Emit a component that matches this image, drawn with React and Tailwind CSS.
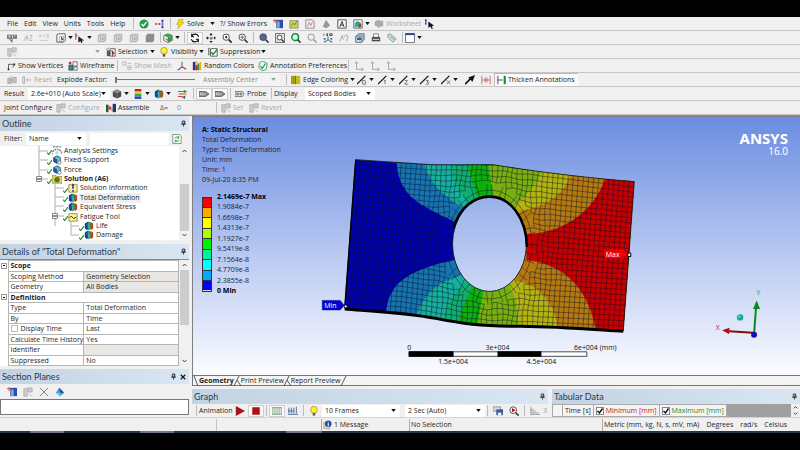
import { useMemo } from "react"
import clsx from "clsx"

// small toolbar drawings, all on a 12 x 12 grid
const glyphs = {
    check: <><circle cx="6" cy="6" r="5.5" fill="#1f9d4d" /><path d="M3 6l2.2 2.4L9 3.8" stroke="#fff" strokeWidth="1.6" fill="none" /></>,
    nodes: <><path d="M1 6h5M6 6l4-4M6 6l4 4" stroke="#99a" fill="none" strokeWidth=".6" /><path d="M0 5h2v2H0zM4 5h2v2H4z" fill="#c22" /><path d="M8 1h2v3H8zM8 5h2v2H8zM8 8h2v3H8z" fill="#22a" /></>,
    bolt: <><path d="M5 0h5L8 4h3L3 12l2-5H2z" fill="#f5d90a" stroke="#b59200" strokeWidth=".6" /></>,
    chartBlue: <><path d="M4 1h8v10H4z" fill="#2b4fa8" /><path d="M5 3h3v8H5z" fill="#88a8e8" /><path d="M0 2h5M2.5 0v5" stroke="#c33" strokeWidth="1" /></>,
    note: <><path d="M1 2h10v9H1z" fill="#d8cf50" stroke="#555" strokeWidth=".6" /><path d="M3 8l2-3 2 2 3-5" stroke="#383" fill="none" /></>,
    page: <><path d="M1 1h8l2 2v8H1z" fill="#f7eeee" stroke="#555" strokeWidth=".7" /><path d="M3 9l2-5 2 4 2-5" stroke="#b55" fill="none" strokeWidth=".8" /></>,
    blob: <path d="M6 1l3 4 2 3-5 3-4-2 2-4z" fill="#999" />,
    boxA: <><path d="M1 1h10v10H1z" fill="#fff" stroke="#333" strokeWidth="1" /><path d="M3.5 9.5L6 3l2.5 6.5M4.5 7.2h3" stroke="#222" fill="none" strokeWidth="1.1" /></>,
    figure: <><path d="M1 1h10v10H1z" fill="#fff" stroke="#556" /><path d="M2 5l3-3 2 3-2 5H2z" fill="#28a8c8" /><path d="M5 3l4 1 1 4-3 3-2-3z" fill="#3a3" /><path d="M7 6l3 0v4H7z" fill="#b33" /></>,
    sheet: <path d="M2 2l4-1 1 1h4v7H7l-2 2-1-2-3-1V4z" fill="#aaa" />,
    pointerInfo: <><path d="M1 0v6M0 2h2M0 6h2" stroke="#22c" strokeWidth="1.2" /><path d="M4 3l7 5-3 .5 1.5 3-1.5.5L6.500 9 4 10.500z" fill="#111" /></>,
    label: <><path d="M0 2h12v5H0z" fill="#777" /><path d="M2 3h2v2H2zM6 3h1v3H6zM8 3h2v1H8z" fill="#eee" /><path d="M3 7l3 4M6 7v4" stroke="#444" /></>,
    coords: <><path d="M1 10l3-7M5 3v6M4 6h3M8 3h3l-3 6h3" stroke="#aaa" fill="none" strokeWidth=".9" /></>,
    xyz: <><path d="M0 2l3 3M3 2L0 5M5 2l1 2 2-2M9 2h3L9 5h3M1 9h3M5 9h3M9 9h2" stroke="#bbb" fill="none" strokeWidth=".9" /></>,
    pick: <><path d="M1 2l2-1h8v8l-2 2H1z" fill="#fff" stroke="#333" strokeWidth=".9" /><path d="M4 4h5v6H4z" fill="none" stroke="#777" strokeWidth=".7" /><path d="M6 4l3 4-2 0v3z" fill="#111" /></>,
    cursorTree: <><path d="M1 0v8M1 3h2" stroke="#b33" strokeWidth="1.2" /><path d="M4 4l7 5-3 .3 1 2.700H7.500L6.500 10 4 11.500z" fill="#222" /></>,
    cubeGrey: <path d="M1.500 3.500h7v7h-7zM1.500 3.500l2-2h7v7l-2 2M4 5v4l4-2z" fill="#e4e4e4" stroke="#999" strokeWidth=".9" />,
    solid: <path d="M1 4l2-3h8v8l-2 2H1z" fill="#8c8c8c" />,
    cubeGreen: <><path d="M1 3l5-2 5 2v6l-5 2.500L1 9z" fill="#f4f4f4" stroke="#333" strokeWidth=".8" /><path d="M1 3l5-2 5 2-5 2z" fill="#2da84a" /><path d="M6 5l5-2v6l-5 2z" fill="#2da84a" /><path d="M3 7l3 2M6 5v5" stroke="#c33" /></>,
    rotate: <path d="M10.500 4.500A4.600 4.600 0 0 0 2 4M2 1v3.500h3M1.500 7.500A4.600 4.600 0 0 0 10 8M10 11V7.500H7" stroke="#111" fill="none" strokeWidth="1.300" />,
    pan: <><path d="M6 1v10M1 6h10" stroke="#333" strokeWidth="1" strokeDasharray="3 1.500" /><path d="M6 0l2 2.500H4zM6 12l2-2.500H4zM0 6l2.500-2v4zM12 6L9.500 4v4z" fill="#222" /></>,
    zoom: <><circle cx="5" cy="5" r="3.800" fill="#fff" stroke="#333" /><path d="M8 8l3.500 3.500" stroke="#222" strokeWidth="2" /><path d="M5 3l1.500 2L5 7 3.500 5z" fill="#222" /></>,
    zoomPlus: <><circle cx="5" cy="5" r="3.800" fill="#fff" stroke="#333" /><path d="M8 8l3.500 3.500" stroke="#222" strokeWidth="1.700" /><path d="M3 5h4M5 3v4" stroke="#444" /></>,
    zoomBlue: <><circle cx="5" cy="5" r="4" fill="#55669a" stroke="#444" /><path d="M8 8l3.500 3.500" stroke="#222" strokeWidth="1.700" /></>,
    zoomBox: <><path d="M.5.5h11v11H.5z" fill="#ddd" stroke="#555" /><circle cx="5.500" cy="5.500" r="2.800" fill="#fff" stroke="#333" /><path d="M8 8l2.500 2.500" stroke="#222" strokeWidth="1.400" /></>,
    zoomGreen: <><circle cx="5" cy="5" r="4" fill="#cfe" stroke="#188a3c" strokeWidth="1.800" /><path d="M8 8l3.500 3.500" stroke="#222" strokeWidth="1.700" /></>,
    zoomGrey: <><circle cx="5" cy="5" r="3.800" fill="#eee" stroke="#888" /><path d="M8 8l3.500 3.500" stroke="#999" strokeWidth="1.700" /></>,
    iso: <><path d="M1 1v2M4 1h2L4 3h2M8 1h3v2H8z" stroke="#333" fill="none" /><path d="M6 4v4L1.500 11M6 8l4.500 3" stroke="#2a8a9a" fill="none" strokeWidth="1.300" /><path d="M1 6h2v2H1zM9 6h2v2H9z" fill="#366" /><path d="M1 10h2v1H1zM9 10h2v1H9z" fill="#c33" /></>,
    restore: <path d="M1 10l3-7M4 3l1 5M7 5a2 2 0 1 1 3 1l-1 4" stroke="#999" fill="none" />,
    view: <><path d="M1 4l3-3h7v7l-3 3H1z" fill="#a9bddc" stroke="#345" strokeWidth=".8" /><path d="M1 4h7v7H1z" fill="#dde6f4" stroke="#345" strokeWidth=".6" /><ellipse cx="5" cy="7" rx="3" ry="1.800" fill="#3a5a9a" /></>,
    print: <><path d="M3 1h6v4H3z" fill="#fff" stroke="#555" strokeWidth=".8" /><path d="M1 5h10v5H1z" fill="#444" /><path d="M2 7h8v1.500H2z" fill="#d8d060" /></>,
    tag: <><path d="M1 2l3-1 7 6-4 4-6-6z" fill="#cfe0e0" stroke="#678" strokeWidth=".8" /><path d="M4 4l5 4" stroke="#688" /></>,
    window: <><path d="M.5.5h11v11H.5z" fill="#fff" stroke="#445" strokeWidth=".9" /><path d="M.5.5h11v2H.5z" fill="#2c3f88" /></>,
    select: <><path d="M1 4h4v7H1z" fill="#3a6a50" /><path d="M5 2h6v9H5z" fill="#f5f0e4" stroke="#333" strokeWidth=".8" /><path d="M7 4l3 4-2 0v3zM0 3l4-2" stroke="#922" fill="#222" strokeWidth=".7" /></>,
    bulb: <><circle cx="6" cy="4.500" r="4" fill="#ffee2e" stroke="#8a7a00" strokeWidth=".7" /><path d="M4.500 8.500h3v3h-3z" fill="#555" /></>,
    suppress: <><path d="M3 2h8v9H3z" fill="#fff" stroke="#333" strokeWidth=".9" /><path d="M1 1v9" stroke="#333" /><path d="M4 6l2 3 5-6" stroke="#1c9a3a" fill="none" strokeWidth="1.800" /></>,
    vertex: <><path d="M3 10V4h7L8 8" stroke="#333" fill="none" strokeWidth=".9" /><path d="M2 9h2v2H2zM9 3h2v2H9z" fill="#222" /></>,
    wire: <><path d="M1 5h5v6H1z" fill="#3b8a8a" stroke="#233" strokeWidth=".7" /><path d="M6 1h5v5H6zM7 7h4v4H7z" fill="#fff" stroke="#333" strokeWidth=".8" /><path d="M1 1h3v3H1z" fill="#c33" /></>,
    mesh: <path d="M1 1h4v4H1zM7 3h4M7 6h4v4H7zM7 8h4" fill="none" stroke="#b0b0b0" strokeWidth=".9" />,
    axes: <><path d="M6 7V1" stroke="#1a9a4a" strokeWidth="1.300" /><path d="M6 7l-5 4" stroke="#2a3ac0" strokeWidth="1.300" /><path d="M6 7l5 3" stroke="#c22" strokeWidth="1.300" /></>,
    palette: <><path d="M1 1h3v10H1z" fill="#2a2a9a" /><path d="M4 1h2v10H4z" fill="#c22" /><path d="M6 3h3v8H6z" fill="#2a9a3a" /><path d="M9 1h2v10H9z" fill="#e0b020" /><path d="M4 1h3v4H4z" fill="#e8d040" /></>,
    annotate: <><path d="M6 0l5 3-1 7-5 2-4-4 1-6z" fill="#e8f6f0" stroke="#2a9a7a" /><path d="M3 6l2 3 4-6" stroke="#1c8a3a" fill="none" strokeWidth="1.300" /></>,
    corner: <path d="M3 1v9h8M1.500 3L3 1l1.500 2M9 8.500l2 1.500-2 1.500" stroke="#999" fill="none" />,
    explode: <path d="M1 4h3v6H1zM5 1v10M7 3h4v6H7zM3 6h6" fill="#ccc" stroke="#999" strokeWidth=".9" />,
    reset: <path d="M1 2v8h2V2zM11 6H5M7 4L5 6l2 2" fill="none" stroke="#aaa" />,
    edge: <><path d="M0 1h5v10H0z" fill="#a8a010" /><path d="M6 1h5v10H6z" fill="#c4bc18" /><path d="M5 1h1v10H5z" fill="#655f00" /></>,
    thickArrow: <><path d="M0 11L7 4" stroke="#111" strokeWidth="2" /><path d="M12 0L4 3l5 5z" fill="#111" /></>,
    gapRed: <path d="M1 1v10M11 1v10M5 3v6M7 3v6M1 6h10" stroke="#b55" fill="none" strokeWidth=".9" />,
    thicken: <><path d="M1 1v10M1 6h6" stroke="#333" /><path d="M8 1h2.500v10H8z" fill="#1a8a3a" /></>,
    edgeFree: <><path d="M0 11L10 1" stroke="#111" strokeWidth="1.500" /><path d="M6 6l4 1v4H7z" fill="none" stroke="#555" strokeWidth=".9" /></>,
    edgeSingle: <><path d="M0 11L10 1" stroke="#111" strokeWidth="1.500" /><path d="M8.500 6v5M7 7l1.500-1" fill="none" stroke="#555" strokeWidth=".9" /></>,
    edgeDouble: <><path d="M0 11L10 1" stroke="#111" strokeWidth="1.500" /><path d="M7 6.500h3L7 11h4" fill="none" stroke="#555" strokeWidth=".9" /></>,
    edgeTriple: <><path d="M0 11L10 1" stroke="#111" strokeWidth="1.500" /><path d="M7 6.500h3L8.500 8.500H10V11H7" fill="none" stroke="#555" strokeWidth=".9" /></>,
    edgeMulti: <><path d="M0 11L10 1" stroke="#111" strokeWidth="1.500" /><path d="M7 6.500l4 4.500M11 6.500L7 11" fill="none" stroke="#555" strokeWidth=".9" /></>,
    cube: <><path d="M1 3l5-2.500L11 3v6l-5 2.500L1 9z" fill="#4b4b4b" /><path d="M1 3l5-2.500L11 3 6 5.500z" fill="#8a8a8a" /><path d="M6 5.500V11" stroke="#999" strokeWidth=".6" /></>,
    bands: <><path d="M2 0h8v3H2z" fill="#c22" /><path d="M2 3h8v3H2z" fill="#e0c820" /><path d="M2 6h8v3H2z" fill="#2aa84a" /><path d="M2 9h8v3H2z" fill="#2a4ac0" /></>,
    ball: <><path d="M1 3l4-2.500L6 6 4 11 1 9z" fill="#1e3f98" /><path d="M5 .5L9 2v7l-4 2.500z" fill="#2a9a4a" /><path d="M8 1.500L11 3v6l-3 2z" fill="#c8401c" /><path d="M4 3l3 2v4l-2 1z" fill="#30b0b0" /></>,
    vectors: <><path d="M0 3h7M1 6h7M0 9h6" stroke="#c33" strokeWidth="1.100" /><path d="M7 1l4 2-4 2z" fill="#2a9a3a" /><path d="M8 4.500l3 1.500-3 2z" fill="#d8b010" /><path d="M5 10l4-2-1 4z" fill="#345" /></>,
    max: <><path d="M0 3h8l4 3-4 3H0z" fill="#888" stroke="#333" strokeWidth=".7" /><path d="M1.500 7.500v-3l1.500 2 1.500-2v3M6 7.500L8 4.500" stroke="#eee" fill="none" strokeWidth=".8" /></>,
    probe: <path d="M0 3h9l2 3-2 3H0zM2 5h2v2H2zM6 5h2v2H6z" fill="#ddd" stroke="#444" strokeWidth=".7" />,
    joint: <path d="M1 2h4v9H1zM6 1h5v5H6zM7 8l4 3" fill="#ccc" stroke="#aaa" strokeWidth=".9" />,
    assemble: <><path d="M0 2h3v9H0z" fill="#235f2b" /><path d="M3 4h3v4H3z" fill="#d33" /><path d="M6 5h2v5H6z" fill="#e8c020" /><path d="M8 1h4v10H8z" fill="#1a3a8a" /></>,
    refresh: <><path d="M1 .5h8l2 2v9H1z" fill="#fff" stroke="#476a47" strokeWidth=".8" /><path d="M3.500 5.500a2.600 2.600 0 0 1 4.500-1M8 2.500v2.500H6M8.500 7a2.600 2.600 0 0 1-4.500 1M4 10V7.500h2" stroke="#1f9a3f" fill="none" strokeWidth="1.100" /></>,
    settings: <><path d="M0 10a6 6 0 0 1 12 0" fill="none" stroke="#667" strokeDasharray="2 1" strokeWidth="1.600" /><path d="M1 1h3M5 1h3M9 1h2" stroke="#345" /><circle cx="6" cy="8" r="2" fill="#a9dff0" /></>,
    support: <><path d="M2 3l4-2 4 2v5l-4 2-4-2z" fill="#58c2d8" stroke="#134" strokeWidth=".8" /><path d="M2 3l4 2v5l-4-2z" fill="#2a4a9a" /><circle cx="9" cy="9" r="2" fill="#fff" stroke="#333" strokeWidth=".7" /></>,
    solution: <><path d="M0 2h5l1 1h6v8H0z" fill="#e8d860" stroke="#7a6a10" strokeWidth=".7" /><circle cx="6" cy="7" r="3.300" fill="#2a8a3a" /><path d="M5 4l4 2-2 4z" fill="#d0441a" /></>,
    info: <><path d="M1 2h10v9H1z" fill="#fdf39a" stroke="#7a6a10" strokeWidth=".8" /><path d="M6 1v6M6 8.500v2" stroke="#1a1a80" strokeWidth="1.700" /></>,
    fatigue: <><path d="M1 2h10v9H1z" fill="#fdf39a" stroke="#7a6a10" strokeWidth=".8" /><path d="M2 7l2-2 3 3 3-2" stroke="#222" fill="none" strokeWidth="1.200" /></>,
    cross: <path d="M1 1l10 10M11 1L1 11" stroke="#777" fill="none" strokeWidth="1.100" />,
    prism: <><path d="M1 7l4-6 6 6-5 4z" fill="#3aa0d8" /><path d="M5 1l6 6H6z" fill="#1a5a9a" /><path d="M1 7l5 4V7z" fill="#7ac8ee" /></>,
    play: <path d="M1 0l11 6-11 6z" fill="#b01018" />,
    stop: <path d="M1.500 1.500h9v9h-9z" fill="#b01018" />,
    gridGreen: <path d="M1 2v8M3.500 2v8M6 2v8M8.500 2v8M11 2v8M0 2h12M0 10h12" stroke="#688a68" fill="none" strokeWidth=".9" />,
    gridBlue: <path d="M1 2v7M4 2v7M7 2v7M10 1v8M0 10h12M0 6h7" stroke="#456a98" fill="none" strokeWidth="1.100" />,
    save: <><path d="M0 1h9v5H0z" fill="#cde" stroke="#678" strokeWidth=".8" /><path d="M4 4h8v7H4z" fill="#3a5a98" /><path d="M6 8h4v3H6z" fill="#fff" /></>,
    zoomRed: <><circle cx="5" cy="5" r="4" fill="#fff" stroke="#333" /><path d="M8 8l3.500 3.500" stroke="#222" strokeWidth="1.700" /><path d="M3.500 2.500L8 5 3.500 7.500z" fill="#b01018" /></>,
    levels: <path d="M1 1v10M1 4h3M1 6h6M1 8h9M1 10h11" stroke="#aaa" fill="none" strokeWidth="1.300" />,
    message: <><path d="M2 3l7 2v6l-7-1z" fill="#e8d8b0" stroke="#a08040" strokeWidth=".6" /><circle cx="7.500" cy="4.500" r="4" fill="#1c50c0" /><path d="M7.500 2v1M7.500 4v3.500" stroke="#fff" strokeWidth="1.300" /></>,
}

const Icon = ({ name }) => (
    <svg viewBox="0 0 12 12" className="size-[10px] shrink-0" aria-hidden="true">{glyphs[name]}</svg>
)

const Arrow = ({ grey }) => (
    <svg viewBox="0 0 6 4" className="w-[5px] h-[3px] shrink-0 pointer-events-none" aria-hidden="true">
        <path d="M0 0h6L3 4z" fill={grey ? "#999" : "#111"} />
    </svg>
)

const Bar = ({ children }) => (
    <div className="flex items-center h-[14px] pl-1 bg-[#f0f0f0] border-b border-[#c6c6c6] overflow-hidden whitespace-nowrap">
        {children}
    </div>
)

const Sep = () => <span className="mx-[2px] h-[11px] w-px shrink-0 bg-[#bdbdbd]" />

const Tool = ({ icon, title, pressed }) => (
    <button aria-label={title || icon}
        className={clsx("flex items-center justify-center w-4 h-3 shrink-0", pressed && "bg-[#fafafa] border border-[#cfcfcf]")}>
        <Icon name={icon} />
    </button>
)

const DropTool = ({ icon, className = "w-[19px]" }) => (
    <button aria-label={icon} className={clsx("flex items-center gap-[2px] h-3 shrink-0", className)}>
        <Icon name={icon} /><Arrow />
    </button>
)

const LabelTool = ({ icon, label, drop, grey, className }) => (
    <button disabled={grey} className={clsx("flex items-center h-3 shrink-0", grey && "text-[#a8a8a8]", className)}>
        {icon && <span className="flex justify-center w-[14px] shrink-0"><Icon name={icon} /></span>}
        {label}
        {drop && <span className="ml-auto pr-[2px]"><Arrow /></span>}
    </button>
)

const Select = ({ label, value, grey, className }) => (
    <span className={clsx("relative flex items-center h-3 shrink-0", grey ? "bg-[#f3f3f3] text-[#8a8a8a]" : "bg-white", className)}>
        <select aria-label={label} disabled={grey} className="appearance-none w-full h-full pl-[3px] opacity-100 outline-none">
            <option>{value}</option>
        </select>
        <span className="absolute right-[4px] flex"><Arrow grey={grey} /></span>
    </span>
)

const Pin = () => (
    <svg viewBox="0 0 8 10" className="w-[5px] h-[7px]" aria-hidden="true">
        <path d="M2 1h4v5H2zM5 1v5M0 6h8M4 6v4" fill="none" stroke="#222" strokeWidth="1.200" />
    </svg>
)

const PanelHeader = ({ title, closable }) => (
    <div className="flex items-center h-[15px] shrink-0 px-[2px] bg-linear-to-r from-[#c3d3e4] to-[#d9e6f2] text-[#2c3a4c]">
        <h2 className="font-['Lato',sans-serif] text-[9px] leading-[13px] whitespace-nowrap">{title}</h2>
        <span className="flex items-center gap-1 ml-auto pr-[1px]">
            <button aria-label={`Pin ${title}`}><Pin /></button>
            {closable && (
                <button aria-label={`Close ${title}`}>
                    <svg viewBox="0 0 8 8" className="size-[6px]"><path d="M1 1l6 6M7 1L1 7" stroke="#111" strokeWidth="1.500" /></svg>
                </button>
            )}
        </span>
    </div>
)

const ScrollBar = ({ thumb }) => (
    <div className="flex flex-col items-center justify-between w-[10px] shrink-0 bg-[#f0f0f0] py-[3px]">
        <svg viewBox="0 0 8 5" className="w-[5px] h-[4px]"><path d="M1 4l3-3 3 3" stroke="#333" fill="none" strokeWidth="1.500" /></svg>
        <span className={clsx("w-[9px] bg-[#cdcdcd]", thumb)} />
        <svg viewBox="0 0 8 5" className="w-[5px] h-[4px]"><path d="M1 1l3 3 3-3" stroke="#333" fill="none" strokeWidth="1.500" /></svg>
    </div>
)

const Toolbars = () => (
    <header>
        <Bar>
            <nav className="flex gap-[6px] w-[127px] pl-[3px]">
                {["File", "Edit", "View", "Units", "Tools", "Help"].map((m) => <button key={m}>{m}</button>)}
            </nav>
            <Sep />
            <Tool icon="check" /><Tool icon="nodes" />
            <Sep />
            <LabelTool icon="bolt" label="Solve" drop className="w-[44px]" />
            <span className="w-[3px]" />
            <LabelTool label="?/ Show Errors" className="w-[50px]" />
            <Tool icon="chartBlue" /><Tool icon="note" /><Tool icon="page" /><Tool icon="blob" /><Tool icon="boxA" />
            <span className="w-[3px]" />
            <DropTool icon="figure" />
            <LabelTool icon="sheet" label="Worksheet" grey className="w-[50px]" />
            <Tool icon="pointerInfo" />
        </Bar>
        <Bar>
            <Tool icon="label" /><Tool icon="coords" /><Tool icon="xyz" />
            <span className="w-1" />
            <DropTool icon="pick" /><DropTool icon="cursorTree" />
            <Tool icon="cubeGrey" title="Vertex" /><Tool icon="cubeGrey" title="Edge" /><Tool icon="cubeGrey" title="Face" /><Tool icon="solid" title="Body" />
            <Sep />
            <DropTool icon="cubeGreen" />
            <Sep />
            <Tool icon="rotate" pressed /><Tool icon="pan" /><Tool icon="zoom" /><Tool icon="zoomPlus" />
            <Sep />
            <Tool icon="zoomBlue" /><Tool icon="zoomBox" /><Tool icon="zoomGreen" /><Tool icon="zoomGrey" /><Tool icon="iso" />
            <Tool icon="restore" /><Tool icon="view" /><Tool icon="print" /><Tool icon="tag" />
            <Sep />
            <DropTool icon="window" />
        </Bar>
        <Bar>
            <Tool icon="joint" />
            <Select label="Named selection" value="" grey className="w-[84px]" />
            <LabelTool icon="select" label="Selection" drop className="w-[53px]" />
            <LabelTool icon="bulb" label="Visibility" drop className="w-[49px]" />
            <LabelTool icon="suppress" label="Suppression" drop className="w-[62px]" />
        </Bar>
        <Bar>
            <LabelTool icon="vertex" label="Show Vertices" className="w-[62px]" />
            <LabelTool icon="wire" label="Wireframe" className="w-[49px]" />
            <Sep />
            <LabelTool icon="mesh" label="Show Mesh" grey className="w-[54px]" />
            <Tool icon="axes" />
            <LabelTool icon="palette" label="Random Colors" className="w-[66px]" />
            <LabelTool icon="annotate" label="Annotation Preferences" className="w-[90px]" />
            <Sep />
            <Tool icon="corner" title="Corner A" /><Tool icon="corner" title="Corner B" /><Tool icon="corner" title="Corner C" />
        </Bar>
        <Bar>
            <Tool icon="explode" />
            <LabelTool icon="reset" label="Reset" grey className="w-[37px]" />
            <label htmlFor="explode" className="w-[58px] shrink-0">Explode Factor:</label>
            <input id="explode" type="range" defaultValue="0"
                className="appearance-none w-[80px] h-px bg-[#777] shrink-0 [&::-webkit-slider-thumb]:appearance-none [&::-webkit-slider-thumb]:w-[2px] [&::-webkit-slider-thumb]:h-[6px] [&::-webkit-slider-thumb]:bg-[#777]" />
            <span className="w-[5px]" />
            <Select label="Explode origin" value="Assembly Center" grey className="w-[80px]" />
            <span className="w-[4px]" />
            <Sep />
            <LabelTool icon="edge" label="Edge Coloring" drop className="w-[68px]" />
            {["edgeFree", "edgeSingle", "edgeDouble", "edgeTriple", "edgeMulti"].map((e) => <DropTool key={e} icon={e} className="w-[21px]" />)}
            <Tool icon="thickArrow" />
            <Tool icon="gapRed" />
            <button className="flex items-center gap-px w-[84px] h-[13px] pl-[2px] bg-[#fafafa] border-t border-l border-[#b8b8b8] shrink-0">
                <Icon name="thicken" />Thicken Annotations
            </button>
        </Bar>
        <Bar>
            <span className="w-[24px] shrink-0">Result</span>
            <Select label="Result scale" value="2.6e+010 (Auto Scale)" className="w-[82px]" />
            <span className="w-[2px]" />
            <DropTool icon="cube" className="w-[21px]" /><DropTool icon="bands" className="w-[21px]" /><DropTool icon="ball" className="w-[21px]" />
            <Tool icon="vectors" />
            <Sep />
            <Tool icon="max" title="Show maximum" pressed /><Tool icon="max" title="Show minimum" pressed />
            <Sep />
            <LabelTool icon="probe" label="Probe" className="w-[36px]" />
            <Sep />
            <span className="w-[31px] shrink-0">Display</span>
            <Select label="Display" value="Scoped Bodies" className="w-[70px]" />
        </Bar>
        <Bar>
            <LabelTool label="Joint Configure" className="w-[50px]" />
            <LabelTool icon="joint" label="Configure" grey className="w-[50px]" />
            <LabelTool icon="assemble" label="Assemble" className="w-[56px]" />
            <span className="w-[17px] text-[#555]">Δ=</span>
            <span className="w-[37px] text-[#888]">0</span>
            <Sep />
            <LabelTool icon="joint" label="Set" grey className="w-[28px]" />
            <LabelTool icon="joint" label="Revert" grey className="w-[40px]" />
        </Bar>
    </header>
)

const tree = [
    { icon: "settings", label: "Analysis Settings", pad: "pl-[47px]" },
    { icon: "support", label: "Fixed Support", pad: "pl-[47px]" },
    { icon: "support", label: "Force", pad: "pl-[47px]" },
    { icon: "solution", label: "Solution (A6)", pad: "pl-[47px]", bold: true },
    { icon: "info", label: "Solution Information", pad: "pl-[63px]" },
    { icon: "ball", label: "Total Deformation", pad: "pl-[63px]", active: true },
    { icon: "ball", label: "Equivalent Stress", pad: "pl-[63px]" },
    { icon: "fatigue", label: "Fatigue Tool", pad: "pl-[63px]" },
    { icon: "ball", label: "Life", pad: "pl-[79px]" },
    { icon: "ball", label: "Damage", pad: "pl-[79px]" },
]

const Outline = () => (
    <section>
        <PanelHeader title="Outline" />
        <div className="flex items-center h-[15px] px-1 bg-[#f0f0f0]">
            <span className="w-[22px]">Filter:</span>
            <Select label="Filter" value="Name" className="w-[60px]" />
            <input aria-label="Filter text" className="flex-1 min-w-0 h-3 ml-1 bg-white" />
            <Tool icon="refresh" />
        </div>
        <div className="flex h-[94px] bg-white">
            <div className="relative flex flex-col flex-1">
                <svg viewBox="0 0 100 94" className="absolute left-0 top-0 w-[100px] h-[94px]" aria-hidden="true">
                    <path d="M39 0v33M39 5h9M39 14h9M39 24h9M42 33h6M55 38v42M55 42h9M55 51h9M55 60h9M58 70h6M71 75v14M71 80h8M71 89h8" stroke="#b0b0b0" fill="none" />
                    <path d="M36.500 30.500h5v5h-5zM52.500 67.500h5v5h-5z" fill="#fff" stroke="#888" />
                    <path d="M37 33h4M53 70h4" stroke="#222" />
                </svg>
                {tree.map((row) => (
                    <button key={row.label} className={clsx("flex items-center flex-1 min-h-0 text-left", row.pad)}>
                        <svg viewBox="0 0 6 6" className="relative size-[5px] self-end"><path d="M0 3l2 2.500L6 0" stroke="#1c8a2c" fill="none" strokeWidth="1.300" /></svg>
                        <Icon name={row.icon} />
                        <span className={clsx("ml-px px-px", row.bold && "font-bold", row.active && "bg-[#f0f0f0]")}>{row.label}</span>
                    </button>
                ))}
            </div>
            <ScrollBar thumb="h-[47px] mt-[28px]" />
        </div>
    </section>
)

const details = [
    { group: "Scope" },
    { name: "Scoping Method", value: "Geometry Selection", locked: true },
    { name: "Geometry", value: "All Bodies", locked: true },
    { group: "Definition" },
    { name: "Type", value: "Total Deformation" },
    { name: "By", value: "Time" },
    { name: "Display Time", value: "Last", box: true },
    { name: "Calculate Time History", value: "Yes" },
    { name: "Identifier", value: "", locked: true },
    { name: "Suppressed", value: "No" },
]

const Details = () => (
    <section className="mt-1">
        <PanelHeader title={'Details of "Total Deformation"'} />
        <div className="flex h-[107px] bg-white border-t border-[#888]">
            <table className="flex-1 h-full table-fixed border-collapse whitespace-nowrap leading-[9px]">
                <colgroup><col className="w-2" /><col className="w-[71px]" /><col /></colgroup>
                <tbody>
                    {details.map((row) => (
                        <tr key={row.group || row.name}>
                            <td className="p-0 align-middle">
                                {row.group && (
                                    <button aria-label={`Collapse ${row.group}`} className="flex items-center justify-center size-[6px] ml-px border border-[#999]">
                                        <span className="w-[2px] h-px bg-black" />
                                    </button>
                                )}
                            </td>
                            {row.group ? (
                                <th colSpan={2} scope="rowgroup" className="p-0 pl-[2px] text-left font-bold border border-[#b5b5b5]">{row.group}</th>
                            ) : (
                                <>
                                    <th scope="row" className="p-0 pl-[2px] text-left font-normal border border-[#b5b5b5]">
                                        {row.box ? (
                                            <label className="flex items-center gap-[3px]">
                                                <input type="checkbox" className="appearance-none size-[7px] border border-[#bbb] bg-white" />
                                                {row.name}
                                            </label>
                                        ) : row.name}
                                    </th>
                                    <td className={clsx("p-0 pl-[2px] border border-[#b5b5b5]", row.locked && "bg-[#e8e7e3]")}>{row.value}</td>
                                </>
                            )}
                        </tr>
                    ))}
                </tbody>
            </table>
            <ScrollBar thumb="h-[55px] mb-[32px]" />
        </div>
    </section>
)

const SectionPlanes = () => (
    <section className="mt-[3px]">
        <PanelHeader title="Section Planes" closable />
        <div className="flex items-center h-[15px] pl-1 bg-[#f0f0f0]">
            <Tool icon="chartBlue" title="New section plane" /><Tool icon="joint" title="Edit section plane" /><Tool icon="cross" title="Delete section plane" />
            <Tool icon="prism" title="Show capping faces" />
        </div>
        <div className="h-4 bg-white border border-[#777]" />
    </section>
)

const legend = [
    ["bg-[#ff0000]", "2.1469e-7 Max"],
    ["bg-[#ffaa00]", "1.9084e-7"],
    ["bg-[#ffff00]", "1.6698e-7"],
    ["bg-[#aaff00]", "1.4313e-7"],
    ["bg-[#00f000]", "1.1927e-7"],
    ["bg-[#00f0a0]", "9.5419e-8"],
    ["bg-[#00ffff]", "7.1564e-8"],
    ["bg-[#00aaff]", "4.7709e-8"],
    ["bg-[#0000ff]", "2.3855e-8"],
    [null, "0 Min"],
]

const PLATE = "M355 158.500C380 160 405 162 430 163.500C455 164 475 163.500 492 163.500C520 168 575 176 634 180.500L623 330C590 328 560 325.500 520 325C480 325 460 322 435 317C410 312 375 310 344 307.500Z"
const HOLE = "M452 243a37 47.500 0 1 0 74 0a37 47.500 0 1 0 -74 0Z"

// each layer covers everything right of its contour line
const contours = [
    ["#1674b0", "M396 150V161C397 180 405 195 425 206C437 213 446 217 457 222L489 243L453 259C425 265 400 275 392 290C387 298 385 306 384 330"],
    ["#16b09c", "M424 150V163C428 180 440 194 466 208L489 243L459 275C437 281 420 293 411 330"],
    ["#0eb070", "M448 150C450 175 456 190 470 203L489 243L465 282C452 292 444 305 440 330"],
    ["#0cb00c", "M465 150C468 170 473 185 478 200L489 243L472 286C465 298 460 308 455 335"],
    ["#78b010", "M486 150L493 200L489 243L483 289L475 335"],
    ["#b4b410", "M546 150C543 180 528 192 514 205L489 243L509 286C517 297 518 308 518 335"],
    ["#b47a10", "M575 150C573 190 550 204 520 210L489 243L516 280C542 285 557 304 559 340"],
    ["#c40000", "M610 150C609 195 575 232 526 233V259C565 263 592 290 597 340"],
]

const topY = (x) => x < 430 ? 158.500 + (x - 355) * 0.067 : x < 492 ? 163.500 : 163.500 + (x - 492) * 0.122
const botY = (x) => x < 400 ? 307.500 + (x - 344) * 0.065 : x < 475 ? 311 + (x - 400) * 0.170 : 324 + (x - 475) * 0.042

function buildMesh() {
    const CX = 489, CY = 243.500, RX = 37, RY = 47.500, RING = 1.240
    const cols = 55, rows = 29
    const pts = []
    for (let j = 0; j <= rows; j++) {
        const line = []
        for (let i = 0; i <= cols; i++) {
            const v = j / rows
            let px = 355 + (i / cols) * 279 - v * 11
            let py = topY(px) + (botY(px) - topY(px)) * v
            const d = Math.hypot((px - CX) / RX, (py - CY) / RY)
            // the free mesh gets less regular towards the hole
            const amp = d < 2.200 ? (2.200 - d) * 1.300 : 0
            px += Math.sin(i * 0.900 + j * 1.100) * amp
            py += Math.cos(i * 1.200 - j * 0.800) * amp
            line.push(d < RING ? null : [px, py])
        }
        pts.push(line)
    }
    let path = ""
    const seg = (a, b) => {
        if (a && b) path += `M${a[0].toFixed(1)} ${a[1].toFixed(1)}L${b[0].toFixed(1)} ${b[1].toFixed(1)}`
    }
    for (let j = 0; j <= rows; j++) {
        for (let i = 0; i <= cols; i++) {
            if (i < cols) seg(pts[j][i], pts[j][i + 1])
            if (j < rows) seg(pts[j][i], pts[j + 1][i])
        }
    }
    // rings and spokes round the hole
    const n = 38
    const at = (k, r) => {
        const t = (k / n) * Math.PI * 2
        return [CX + Math.cos(t) * RX * r, CY + Math.sin(t) * RY * r]
    }
    for (let k = 0; k < n; k++) {
        seg(at(k, 1), at(k + Math.sin(k * 3) * 0.300, 1.270))
        seg(at(k, 1.150), at(k + 1, 1.150))
    }
    return path
}

const Model = () => {
    const mesh = useMemo(buildMesh, [])

    return (
        <svg viewBox="192 116 608 258" className="absolute inset-0 w-full h-full font-['Open_Sans',sans-serif]" role="img" aria-label="Total deformation plot">
            <defs>
                <clipPath id="plate"><path d={`${PLATE}${HOLE}`} clipRule="evenodd" /></clipPath>
            </defs>
            <g clipPath="url(#plate)">
                <path d={PLATE} fill="#0000ac" />
                {contours.map(([fill, d]) => <path key={fill} d={`${d}H700V150Z`} fill={fill} />)}
                <path d={mesh} stroke="#10102a" strokeWidth=".7" strokeOpacity=".65" fill="none" />
            </g>
            <path d={PLATE} fill="none" stroke="#111" strokeWidth=".8" />
            <path d={HOLE} fill="none" stroke="#111" strokeWidth=".8" />
            <path d="M355 158.500L344 307.500" stroke="#000" strokeWidth="1.400" />
            <path d="M453 227C459 207 473 195.500 489 195.500C510 195.500 526 217 526.500 246" stroke="#000" strokeWidth="2.600" fill="none" />
            <path d="M344 308C375 310.500 410 312.500 435 317.500C460 322.500 480 325.500 520 325.500C560 326 590 328.500 623 330.500" stroke="#000" strokeWidth="3" fill="none" />

            {/* probe labels */}
            <path d="M321.500 299.500h18l4 5-4 4.500h-18z" fill="#0000d8" stroke="#000080" strokeWidth=".5" />
            <text x="323.500" y="307" fontSize="7" fill="#fff">Min</text>
            <circle cx="345" cy="305.500" r="1.500" fill="#fff" stroke="#000" strokeWidth=".8" />
            <path d="M604 248.500h19l4 4.500-4 4.500h-19z" fill="#f00000" />
            <text x="605.500" y="256" fontSize="7" fill="#fff">Max</text>
            <path d="M627.500 252h3v3.500h-3z" fill="#fff" stroke="#000" />

            {/* scale ruler */}
            <path d="M408.500 351h178v4.500h-178z" fill="#fff" stroke="#222" strokeWidth=".8" />
            <path d="M408 350.500h45v5.500h-45zM497 350.500h44v5.500h-44z" fill="#000" />
            <g fontSize="7" fill="#111" textAnchor="middle">
                <text x="408.500" y="349">0</text>
                <text x="497" y="349">3e+004</text>
                <text x="595" y="349">6e+004 (mm)</text>
                <text x="452.500" y="363">1.5e+004</text>
                <text x="541" y="363">4.5e+004</text>
            </g>

            {/* triad */}
            <path d="M754 333L756 306" stroke="#0a8a1a" strokeWidth="2" />
            <path d="M756.500 299.500l3.500 8.500h-7z" fill="#0a8a1a" />
            <path d="M753 332L729 330.500" stroke="#8a0a0a" strokeWidth="2" />
            <path d="M722 329.500l7.500-2.500-.5 6.500z" fill="#b01010" />
            <circle cx="754" cy="334" r="3" fill="#1010b0" />
            <circle cx="740" cy="316.500" r="3.200" fill="#18a8a8" />
            <circle cx="739" cy="315.500" r="1" fill="#7ee6e6" />
            <text x="756.500" y="294.500" fontSize="7" fill="#1a9a3a">Y</text>
            <text x="715.500" y="329" fontSize="7" fill="#d02030">X</text>
        </svg>
    )
}

const Viewport = () => (
    <section className="relative flex-1 min-h-[258px] border-l border-t border-[#808080] bg-linear-to-b from-[#6b8ce0] via-[#b5c5f0] to-[#fbfcff]">
        <Model />
        <div className="relative flex flex-col w-[110px] pt-[8px] pl-[9px] text-[#20242c] whitespace-nowrap">
            <div className="flex flex-col justify-between h-[58px]">
                <p className="font-bold text-black">A: Static Structural</p>
                <p>Total Deformation</p>
                <p>Type: Total Deformation</p>
                <p>Unit: mm</p>
                <p>Time: 1</p>
                <p>09-Jul-20 8:35 PM</p>
            </div>
            <div className="flex items-center gap-[5px] mt-[9px]">
                <div className="flex flex-col w-[10px] h-[95px] border border-[#333] divide-y divide-[#333]">
                    {legend.map(([color]) => color && <span key={color} className={clsx("flex-1", color)} />)}
                </div>
                <ul className="flex flex-col justify-between h-[104px]">
                    {legend.map(([, text]) => (
                        <li key={text} className={clsx((text.endsWith("Max") || text.endsWith("Min")) && "font-bold text-black")}>{text}</li>
                    ))}
                </ul>
            </div>
        </div>
        <div className="absolute right-3 top-[13px] flex flex-col items-end text-white font-['Noto_Sans',sans-serif]">
            <span className="text-[15px] leading-[16px] font-bold">ANSYS</span>
            <span className="text-[10px] leading-[10px]">16.0</span>
        </div>
    </section>
)

const Slant = ({ double }) => (
    <svg viewBox="0 0 7 10" className="w-[7px] h-[10px]" aria-hidden="true">
        <path d={double ? "M0 10L5 0M3 4l4 6" : "M1 10L6 0"} stroke="#333" fill="none" strokeWidth=".8" />
    </svg>
)

const ViewTabs = () => (
    <div role="tablist" className="flex items-center h-[11px] bg-[#f4f4f4] border-t border-b border-[#777] border-l whitespace-nowrap">
        <svg viewBox="0 0 6 10" className="w-[6px] h-[10px]"><path d="M1 0l4 10" stroke="#333" strokeWidth=".8" /></svg>
        <button role="tab" aria-selected="true" className="font-bold">Geometry</button>
        <Slant double />
        <button role="tab">Print Preview</button>
        <Slant double />
        <button role="tab">Report Preview</button>
        <Slant />
    </div>
)

const Graph = () => (
    <section className="w-[356px] shrink-0">
        <PanelHeader title="Graph" />
        <div className="flex items-center h-[13px] pl-[2px] bg-[#f0f0f0] overflow-hidden whitespace-nowrap">
            <Sep />
            <span className="w-[33px]">Animation</span>
            <Tool icon="play" /><Tool icon="stop" pressed />
            <Sep />
            <Tool icon="gridGreen" pressed /><Tool icon="gridBlue" />
            <Sep />
            <Tool icon="bulb" />
            <Select label="Frames" value="10 Frames" className="w-[78px]" />
            <span className="w-[5px]" />
            <Select label="Duration" value="2 Sec (Auto)" className="w-[80px]" />
            <Sep />
            <Tool icon="save" /><Tool icon="zoomRed" />
            <Sep />
            <Tool icon="levels" />
            <span className="text-[#999]">3</span>
        </div>
    </section>
)

const SeriesBox = ({ label, color }) => (
    <th className="p-0 border border-[#aaa] bg-[#f4f4f4] font-normal">
        <label className={clsx("flex items-center gap-[2px] px-[2px]", color)}>
            <span className="relative flex">
                <input type="checkbox" defaultChecked className="appearance-none size-2 bg-white border border-[#888]" />
                <svg viewBox="0 0 8 8" className="absolute inset-0 size-2 pointer-events-none"><path d="M1.500 4l2 2 3-4.500" stroke="#111" strokeWidth="1.400" fill="none" /></svg>
            </span>
            {label}
        </label>
    </th>
)

const TabularData = () => (
    <section className="flex-1 min-w-0">
        <PanelHeader title="Tabular Data" />
        <div className="flex items-center h-[13px] bg-[#a0a0a0]">
            <table className="border-collapse whitespace-nowrap h-[13px]">
                <thead>
                    <tr>
                        <td className="w-[10px] p-0 border border-[#aaa] bg-[#f4f4f4]" />
                        <th className="px-[2px] py-0 border border-[#aaa] bg-[#f4f4f4] font-normal">Time [s]</th>
                        <SeriesBox label="Minimum [mm]" color="text-[#b8202c]" />
                        <SeriesBox label="Maximum [mm]" color="text-[#2a8a2a]" />
                    </tr>
                </thead>
            </table>
            <div className="flex flex-col items-center justify-center gap-[3px] w-[9px] h-full ml-auto bg-[#f0f0f0]">
                <svg viewBox="0 0 8 5" className="w-[5px] h-[3px]"><path d="M1 4l3-3 3 3" stroke="#333" fill="none" strokeWidth="1.500" /></svg>
                <svg viewBox="0 0 8 5" className="w-[5px] h-[3px]"><path d="M1 1l3 3 3-3" stroke="#333" fill="none" strokeWidth="1.500" /></svg>
            </div>
        </div>
    </section>
)

const StatusBar = () => (
    <footer className="flex items-center h-[14px] bg-[#f0f0f0] border-t border-[#d4d4d4] leading-[12px] whitespace-nowrap">
        <span className="w-[216px] shrink-0" />
        <span className="w-[105px] h-3 shrink-0 border-l border-[#c4c4c4]" />
        <button className="flex items-center gap-[2px] w-[88px] h-3 shrink-0 border-l border-[#aaa]"><Icon name="message" />1 Message</button>
        <span className="flex-1 h-3 pl-px border-l border-[#aaa]">No Selection</span>
        <span className="flex gap-[7px] h-3 w-[198px] pl-px border-l border-[#aaa]">
            <span>Metric (mm, kg, N, s, mV, mA)</span><span>Degrees</span><span>rad/s</span><span>Celsius</span>
        </span>
    </footer>
)

export default function App() {
    return (
        <div className="flex flex-col min-h-screen py-[17px] bg-black font-['Open_Sans',sans-serif] text-[7px] leading-[10px] text-[#1e1e1e]">
            <Toolbars />
            <main className="flex flex-1 gap-[3px] bg-[#f0f0f0] border-t border-[#8a8a8a]">
                <aside className="w-[189px] shrink-0">
                    <Outline />
                    <Details />
                    <SectionPlanes />
                </aside>
                <div className="flex flex-col flex-1 min-w-0">
                    <Viewport />
                    <ViewTabs />
                    <div className="flex gap-1 mt-[3px]">
                        <Graph />
                        <TabularData />
                    </div>
                </div>
            </main>
            <StatusBar />
            <div className="flex h-[2px] bg-[#26344f]">
                <span className="w-[34px] ml-[30px] bg-[#6c7687]" />
                <span className="w-[34px] ml-[76px] bg-[#6c7687]" />
                <span className="w-[36px] ml-[112px] bg-[#6c7687]" />
            </div>
        </div>
    )
}
